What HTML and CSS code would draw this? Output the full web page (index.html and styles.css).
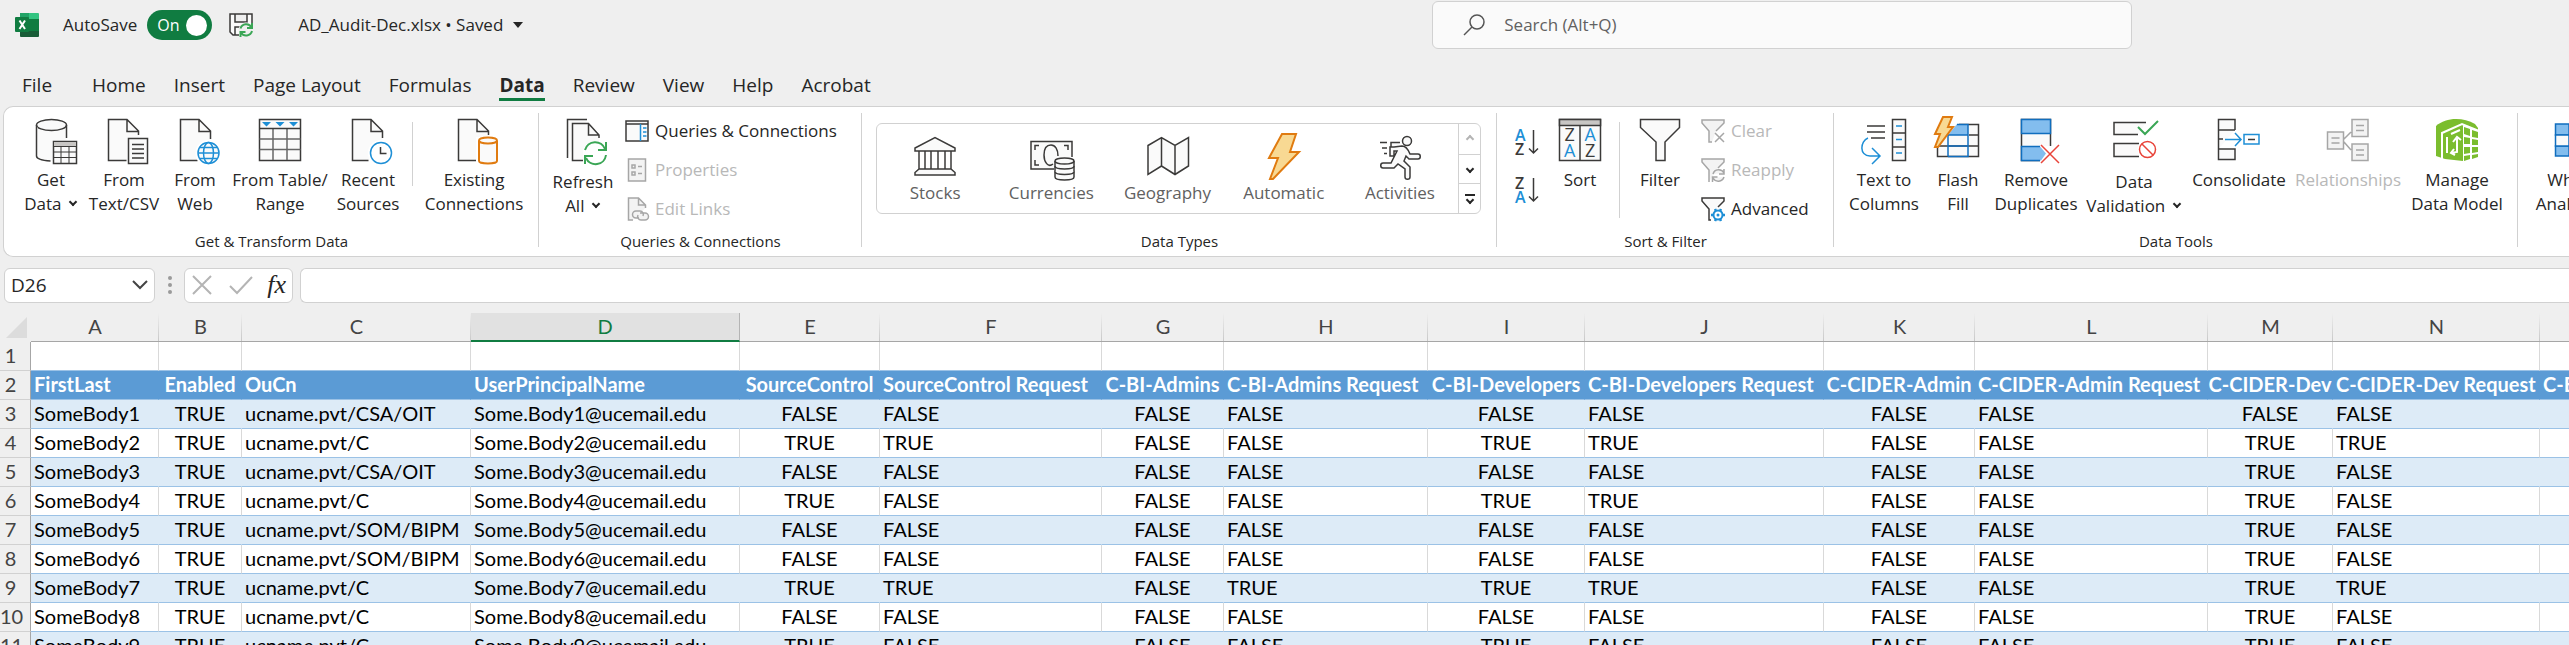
FILE: index.html
```
<!DOCTYPE html>
<html lang="en">
<head>
<meta charset="utf-8">
<title>AD_Audit-Dec.xlsx</title>
<link rel="stylesheet" href="styles.css">
</head>
<body>
<div class="app">
<header class="titlebar">
  <svg class="i24" viewBox="0 0 24 24" aria-hidden="true"><path fill="#21a366" d="M5 0h10v6H5z"/><path fill="#33c481" d="M14 0h9a1 1 0 0 1 1 1v5H14z"/><path fill="#107c41" d="M5 6h19v6H5z"/><path fill="#185c37" d="M5 12h19v11a1 1 0 0 1-1 1H6a1 1 0 0 1-1-1z"/><path fill="#107c41" d="M14 12h10v6H14zM1 4h12a1 1 0 0 1 1 1v13a1 1 0 0 1-1 1H1a1 1 0 0 1-1-1V5a1 1 0 0 1 1-1z"/><path stroke="#fff" stroke-width="2" d="M4.500 7.500l5.500 8.500M10 7.500L4.500 16"/></svg>
  <label class="autosave"><span>AutoSave</span><span class="toggle">On<input type="checkbox" checked></span></label>
  <button class="plain" aria-label="Save"><svg class="i24" viewBox="0 0 24 24"><path class="s" d="M10 22H4l-3-3V1h22v9M6 1v8h12V1M6 22v-8h5"/><circle cx="17" cy="17" r="7.500" fill="#efefef"/><path class="g" d="M11.500 15.500a6 6 0 0 1 11-1M23 10v5h-5M23 18a6 6 0 0 1-11 1.500M11.500 24v-5h5"/></svg></button>
  <button class="plain doc-name">AD_Audit-Dec.xlsx • Saved <svg width="10" height="6" viewBox="0 0 10 6"><path fill="#262626" d="M0 0h10L5 6z"/></svg></button>
  <label class="search"><svg class="i24" viewBox="0 0 24 24"><circle cx="15" cy="9" r="7" fill="none" stroke="#555" stroke-width="1.500"/><path stroke="#555" stroke-width="1.500" d="M10 14L2 22"/></svg><input type="text" placeholder="Search (Alt+Q)" aria-label="Search"></label>
</header>
<nav class="tabs">
  <button class="tab file">File</button><button class="tab">Home</button><button class="tab">Insert</button><button class="tab">Page Layout</button><button class="tab">Formulas</button><button class="tab active">Data</button><button class="tab">Review</button><button class="tab">View</button><button class="tab">Help</button><button class="tab">Acrobat</button>
</nav>
<main class="ribbon">
  <section class="group g-get">
    <div class="body">
      <button class="big"><svg class="i48" viewBox="0 0 48 48"><path class="fill" d="M9.500 7v31c0 3 7 5 15 5h15V7z"/><ellipse class="s" cx="24.500" cy="7" rx="15" ry="5.500"/><path class="s" d="M9.500 7v31c0 3 6 4.500 14 5M39.500 7v13"/><path class="s" d="M26.500 23.500h23v22h-23z"/><path fill="#c8c6c4" d="M27 24h22v4H27z"/><path class="s thin" d="M26.500 28.500h23M26.500 34h23M26.500 39.500h23M34 28.500v17M42 28.500v17"/></svg><span>Get<br>Data <i class="chev"></i></span></button>
      <button class="big"><svg class="i48" viewBox="0 0 48 48"><path class="fill" d="M8.500 1.500H27L38.500 13v29h-30z"/><path class="s" d="M38.500 17v-4L27 1.500H8.500v41h18M27 1.500v12h11.500"/><path class="s" d="M28.500 20.500h19v25h-19z"/><path class="s" stroke="#777" d="M32 26.500h12M32 31h12M32 35.500h12M32 40h12"/></svg><span>From<br>Text/CSV</span></button>
      <button class="big"><svg class="i48" viewBox="0 0 48 48"><path class="fill" d="M9.500 1.500H28L39.500 13v29h-30z"/><path class="s" d="M39.500 21v-8L28 1.500H9.500v41h17M28 1.500v12h11.500"/><circle cx="37.500" cy="35" r="13" fill="#fff"/><g class="b"><circle cx="37.500" cy="35" r="10.500" fill="#fafafa"/><ellipse cx="37.500" cy="35" rx="5" ry="10.500"/><path d="M27 35h21M29 29.500h17M29 40.500h17"/></g></svg><span>From<br>Web</span></button>
      <button class="big"><svg class="i48" viewBox="0 0 48 48"><path class="s" d="M3.500 1.500h41v41h-41z"/><path stroke="#666" fill="none" stroke-width="1.500" d="M3.500 21h41M3.500 31.500h41M17 10v32M31 10v32"/><path class="s" d="M3.500 10.500h41"/><path fill="#1e8fd6" d="M6 4h9l-4.500 4.500zM19.500 4h9L24 8.500zM33 4h9l-4.500 4.500z"/></svg><span>From Table/<br>Range</span></button>
      <button class="big"><svg class="i48" viewBox="0 0 48 48"><path class="fill" d="M8.500 1.500H27L38.500 13v29h-30z"/><path class="s" d="M38.500 20v-7L27 1.500H8.500v41h16M27 1.500v12h11.500"/><circle cx="37" cy="35" r="13" fill="#fff"/><circle class="b" cx="37" cy="35" r="10.500"/><path class="s" d="M36.500 29v6.500h6"/></svg><span>Recent<br>Sources</span></button>
      <div class="split"></div>
      <button class="big"><svg class="i48" viewBox="0 0 48 48"><path class="fill" d="M8.500 1.500H27L38.500 13v29h-30z"/><path class="s" d="M38.500 17v-4L27 1.500H8.500v41h18M27 1.500v12h11.500"/><path fill="#fff" d="M26 19h24v28H26z"/><g class="o"><path d="M29 23v20c0 1.500 4 2.500 9 2.500s9-1 9-2.500V23"/><ellipse cx="38" cy="22.500" rx="9" ry="3"/></g></svg><span>Existing<br>Connections</span></button>
    </div>
    <div class="caption">Get &amp; Transform Data</div>
  </section>
  <section class="group g-query">
    <div class="body">
      <button class="big low"><svg class="i48" viewBox="0 0 48 48"><path class="s" d="M8.500 40V1.500H28"/><path class="fill" d="M13.500 6.500H29L40 17v25H13.500z"/><path class="s" d="M40 20v-3L29.500 5.500h-16v37H24M29.500 5.500V17H40"/><circle cx="36" cy="35" r="12" fill="#fff"/><path class="g" d="M26 32a10.500 10.500 0 0 1 20-1M47 24v8h-8M47 37a10.500 10.500 0 0 1-20 3M26 46v-8h8"/></svg><span>Refresh<br>All <i class="chev"></i></span></button>
      <div class="stack">
        <button class="row"><svg class="i24" viewBox="0 0 24 24"><path class="s" d="M1 2h22v20H1zM1 5h22"/><path class="b" d="M15.500 5v17M18 9h3.500M18 13h3.500M18 17h3.500"/></svg>Queries &amp; Connections</button>
        <button class="row" disabled><svg class="i24" viewBox="0 0 24 24"><path class="d" d="M3.500 1h17v22h-17zM7 7h3v3H7zM7 14h3v3H7zM13 8.500h4M13 15.500h4"/></svg>Properties</button>
        <button class="row" disabled><svg class="i24" viewBox="0 0 24 24"><path class="d" d="M20.500 11V8l-7-7h-10v22H8M13.500 1v7h7"/><path class="d" d="M14 21h-3a3.500 3.500 0 0 1 0-7h4a3.500 3.500 0 0 1 3 5M15 16h5a3.500 3.500 0 0 1 0 7h-4a3.500 3.500 0 0 1-3-5"/></svg>Edit Links</button>
      </div>
    </div>
    <div class="caption">Queries &amp; Connections</div>
  </section>
  <section class="group g-types">
    <div class="gallery">
      <button class="type"><svg class="i48" viewBox="0 0 48 48"><path class="s" d="M4 18v-3L24 4.500 44 15v3zM8 18v18M14 18v18M20 18v18M27 18v18M34 18v18M40 18v18M8 36h32l4 3.500V42H4v-2.500z"/></svg><span>Stocks</span></button>
      <button class="type"><svg class="i48" viewBox="0 0 48 48"><path class="s" d="M27 36H4V8.500h41V24M12 12.500H8V17M8 27v5h4M37 12.500h4V17"/><path class="s" d="M26 31c-5 4-9-2-9-9s3-10 7-10 7 4 7 11"/><g class="s"><path d="M28 28v16c0 4 19 4 19 0V28"/><ellipse cx="37.500" cy="28" rx="9.500" ry="3"/><path d="M28 33c0 4 19 4 19 0M28 38.500c0 4 19 4 19 0"/></g></svg><span>Currencies</span></button>
      <button class="type"><svg class="i48" viewBox="0 0 48 48"><path class="s" d="M4 12.500L17.500 4.500 31 12.500 44.500 4.500V33L31 41.500 17.500 33 4 41.500zM17.500 4.500V33M31 12.500v29"/></svg><span>Geography</span></button>
      <button class="type"><svg class="i48" viewBox="0 0 48 48"><path fill="#f8d993" stroke="#e07b10" stroke-width="2" d="M22 1h14l-6 18h9L13 46h-3l8-21H9z"/></svg><span>Automatic</span></button>
      <button class="type"><svg class="i48" viewBox="0 0 48 48"><circle class="s" cx="31" cy="8" r="4.500"/><path class="s" d="M15 23V9.500h9M4 9.500h7M6 15h5M8 20.500h3"/><path class="s" d="M18 14l8-1c4 0 6 3 8 8h8c3 0 3 5 0 5H33l-3-3-2 5 6 6v10c0 3-5 3-5 0V36l-7-5-4 4H7c-3 0-3-5 0-5h8l6-12h-3v5h-4V14z"/></svg><span>Activities</span></button>
      <div class="spin"><button aria-label="Up" disabled><i class="chev up"></i></button><button aria-label="Down"><i class="chev"></i></button><button class="more" aria-label="More"><i class="chev"></i></button></div>
    </div>
    <div class="caption">Data Types</div>
  </section>
  <section class="group g-sort">
    <div class="body">
      <div class="az">
        <button class="plain" aria-label="Sort A to Z"><svg class="i24" viewBox="0 0 24 24"><text x="0" y="11" class="t tb">A</text><text x="0" y="25" class="t">Z</text><path class="s" d="M18.500 0v23M14 18.500l4.500 4.500 4.500-4.500"/></svg></button>
        <button class="plain" aria-label="Sort Z to A"><svg class="i24" viewBox="0 0 24 24"><text x="0" y="11" class="t">Z</text><text x="0" y="25" class="t tb">A</text><path class="s" d="M18.500 0v23M14 18.500l4.500 4.500 4.500-4.500"/></svg></button>
      </div>
      <button class="big"><svg class="i48" viewBox="0 0 48 48"><path class="s" d="M3.500 1.500h41v41h-41z"/><path fill="#c8c6c4" stroke="#3b3a39" stroke-width="1.500" d="M3.500 1.500h41v6h-41z"/><path class="s" d="M24 7.500v35"/><text x="8.500" y="23" class="u">Z</text><text x="8" y="39" class="u tb">A</text><text x="28.500" y="23" class="u tb">A</text><text x="29" y="39" class="u">Z</text></svg><span>Sort</span></button>
      <div class="split tall"></div>
      <button class="big"><svg class="i48" viewBox="0 0 48 48"><path class="s" d="M4.500 1.500h39v8L29 24v18.500h-9V24L4.500 9.500z"/></svg><span>Filter</span></button>
      <div class="stack">
        <button class="row" disabled><svg class="i24" viewBox="0 0 24 24"><path class="d" d="M11 23h-3V12L1 4V1h22v3l-8 8M14 14l9 9M23 14l-9 9"/></svg>Clear</button>
        <button class="row" disabled><svg class="i24" viewBox="0 0 24 24"><path class="d" d="M8 24V12L1 4V1h22v3l-6 6M12 16a6 6 0 0 1 11-1M23 11v5h-5M23 19a6 6 0 0 1-11 1M11.500 24v-5h5"/></svg>Reapply</button>
        <button class="row"><svg class="i24" viewBox="0 0 24 24"><path class="s" d="M10 23H8V12L1 4V1h22v3l-6 6"/><circle cx="17" cy="18" r="4.500" fill="none" stroke="#1e8fd6" stroke-width="2"/><circle cx="17" cy="18" r="1.500" fill="#1e8fd6"/><path stroke="#1e8fd6" stroke-width="2.500" d="M14 12l1 2M20 12l-1 2M14 24l1-2M20 24l-1-2M10 18h3M21 18h3"/></svg>Advanced</button>
      </div>
    </div>
    <div class="caption">Sort &amp; Filter</div>
  </section>
  <section class="group g-tools">
    <div class="body">
      <button class="big"><svg class="i48" viewBox="0 0 48 48"><path class="s" d="M7 8h18M7 14h18M11 20h14M32.500 1.500h13v41h-13zM32.500 15h13M32.500 29h13"/><path class="b" d="M8 20c-8 3-9 18 2 18h10M12 30l8 8-8 8M36 8h6M36 21.500h6M36 35h6"/></svg><span>Text to<br>Columns</span></button>
      <button class="big"><svg class="i48" viewBox="0 0 48 48"><path class="s" d="M3.500 28v10.500h41v-32H25M35 17h9.500M3.500 28h41"/><path fill="#83bdee" d="M14 17L23 6h11v11z"/><path fill="none" stroke="#106ebe" stroke-width="1.500" d="M14 38.500V17h20M14 28h20M23 6.500h11v32H14"/><path fill="#f8d993" stroke="#e07b10" stroke-width="2" d="M9-1h9l-4 10h5L4 29H1l5-13H1z"/></svg><span>Flash<br>Fill</span></button>
      <button class="big"><svg class="i48" viewBox="0 0 48 48"><path class="s" d="M9.500 1.500h29v41h-29z"/><path fill="#83bdee" stroke="#106ebe" stroke-width="1.500" d="M9.500 1.500h29v14h-29z"/><path fill="#fff" d="M28 28h20v19H28z"/><path fill="#83bdee" d="M9.500 28.500H28l6 7-5 7H9.500z"/><path fill="none" stroke="#106ebe" stroke-width="1.500" d="M28 28.500H9.500v14H28"/><path stroke="#e8443a" stroke-width="1.500" d="M29 27l18 18M47 27L29 45"/></svg><span>Remove<br>Duplicates</span></button>
      <button class="big low"><svg class="i48" viewBox="0 0 48 48"><path class="s" d="M36 4.500H4v12h24M29 25.500H4v13h25"/><path class="g" d="M28 9l7 7L48 3"/><circle cx="37.500" cy="31.500" r="10" fill="#fff"/><g fill="none" stroke="#e8443a" stroke-width="1.500"><circle cx="37.500" cy="31.500" r="8"/><path d="M32 26l11 11"/></g></svg><span>Data<br>Validation <i class="chev"></i></span></button>
      <button class="big"><svg class="i48" viewBox="0 0 48 48"><path class="s" d="M20 12V1.500H3.500v40H20V31H3.500M3.500 12H20M3.500 21H8"/><path class="b" d="M10 21.500h16M20 15l6 6.500-6 6.500M29 16.500h15v9.500H29z"/><path class="s" d="M33 21.500h7"/></svg><span>Consolidate</span></button>
      <button class="big" disabled><svg class="i48" viewBox="0 0 48 48"><path class="d" d="M3.500 14h16v17h-16zM28 1.500h16v17H28zM28 26h16v16.500H28zM7.500 20h8M7.500 25h8M32 7.500h8M32 12.500h8M32 32h8M32 37h8M20 21l7-7M20 24l7 8"/></svg><span>Relationships</span></button>
      <button class="big"><svg class="i48" viewBox="0 0 48 48"><path fill="#7bbd2e" d="M3 8C13-1 30-1 42 6l3 4v28L30 43 12 41 3 38z"/><path fill="none" stroke="#fff" stroke-width="2" d="M9 42V15L29 6l17 7M14 19v16M18 16l9-4"/><path fill="#fff" d="M30 7l16 6v26l-16 5z"/><path fill="#7bbd2e" d="M31 9l6 2v7l-6-2zM39 12l6 2v6l-6-1zM31 19l6 1v6h-6zM39 21l6 1v5h-6zM31 29h6v6l-6 1zM39 29h6v5l-6 1zM31 38l6-1v4l-6 2zM39 37l6-1v3l-6 2z"/><path fill="none" stroke="#fff" stroke-width="2" d="M20 24l4-5 4 3M24 20v14l-6 1M21 31l-3 4 4 2"/></svg><span>Manage<br>Data Model</span></button>
    </div>
    <div class="caption">Data Tools</div>
  </section>
  <section class="group g-forecast">
    <div class="body">
      <button class="big"><svg class="i48" viewBox="0 0 48 48"><path fill="#83bdee" stroke="#106ebe" stroke-width="1.500" d="M3.500 6h30v11h-30zM3.500 28h30v10h-30z"/><path fill="#fafafa" stroke="#106ebe" stroke-width="1.500" d="M3.500 17h30v11h-30zM17 6v32"/></svg><span>What-If<br>Analysis <i class="chev"></i></span></button>
    </div>
  </section>
</main>
<div class="formula">
  <div class="box name"><input type="text" value="D26" aria-label="Name box"><svg width="16" height="10" viewBox="0 0 16 10"><path class="n" d="M1 1l7 7 7-7"/></svg></div>
  <div class="dots"><i></i><i></i><i></i></div>
  <div class="box fx"><button class="plain" aria-label="Cancel" disabled><svg class="i24" viewBox="0 0 24 24"><path class="x" d="M3 3l18 18M21 3L3 21"/></svg></button><button class="plain" aria-label="Enter" disabled><svg class="i24" viewBox="0 0 24 24"><path class="x" d="M1 13l7 7L23 4"/></svg></button><button class="plain fxb" aria-label="Insert function">fx</button></div>
  <input class="box field" type="text" aria-label="Formula bar">
</div>
<div class="sheet">
<table>
<colgroup><col class="w-n"><col class="w-a"><col class="w-b"><col class="w-c"><col class="w-d"><col class="w-e"><col class="w-f"><col class="w-g"><col class="w-h"><col class="w-i"><col class="w-j"><col class="w-k"><col class="w-l"><col class="w-m"><col class="w-o"><col class="w-p"></colgroup>
<thead><tr><th class="corner"><svg width="21" height="21" viewBox="0 0 21 21"><path fill="#dcdcdc" d="M21 0v21H0z"/></svg></th><th>A</th><th>B</th><th>C</th><th class="sel">D</th><th>E</th><th>F</th><th>G</th><th>H</th><th>I</th><th>J</th><th>K</th><th>L</th><th>M</th><th>N</th><th>O</th></tr></thead>
<tbody>
<tr class="first"><th>1</th><td></td><td></td><td></td><td></td><td></td><td></td><td></td><td></td><td></td><td></td><td></td><td></td><td></td><td></td><td></td></tr>
<tr class="head"><th>2</th><td>FirstLast</td><td>Enabled</td><td>OuCn</td><td>UserPrincipalName</td><td>SourceControl</td><td>SourceControl Request</td><td>C-BI-Admins</td><td>C-BI-Admins Request</td><td>C-BI-Developers</td><td>C-BI-Developers Request</td><td>C-CIDER-Admin</td><td>C-CIDER-Admin Request</td><td>C-CIDER-Dev</td><td>C-CIDER-Dev Request</td><td>C-ED</td></tr>
<tr><th>3</th><td>SomeBody1</td><td>TRUE</td><td>ucname.pvt/CSA/OIT</td><td>Some.Body1@ucemail.edu</td><td>FALSE</td><td>FALSE</td><td>FALSE</td><td>FALSE</td><td>FALSE</td><td>FALSE</td><td>FALSE</td><td>FALSE</td><td>FALSE</td><td>FALSE</td><td></td></tr>
<tr><th>4</th><td>SomeBody2</td><td>TRUE</td><td>ucname.pvt/C</td><td>Some.Body2@ucemail.edu</td><td>TRUE</td><td>TRUE</td><td>FALSE</td><td>FALSE</td><td>TRUE</td><td>TRUE</td><td>FALSE</td><td>FALSE</td><td>TRUE</td><td>TRUE</td><td></td></tr>
<tr><th>5</th><td>SomeBody3</td><td>TRUE</td><td>ucname.pvt/CSA/OIT</td><td>Some.Body3@ucemail.edu</td><td>FALSE</td><td>FALSE</td><td>FALSE</td><td>FALSE</td><td>FALSE</td><td>FALSE</td><td>FALSE</td><td>FALSE</td><td>TRUE</td><td>FALSE</td><td></td></tr>
<tr><th>6</th><td>SomeBody4</td><td>TRUE</td><td>ucname.pvt/C</td><td>Some.Body4@ucemail.edu</td><td>TRUE</td><td>FALSE</td><td>FALSE</td><td>FALSE</td><td>TRUE</td><td>TRUE</td><td>FALSE</td><td>FALSE</td><td>TRUE</td><td>FALSE</td><td></td></tr>
<tr><th>7</th><td>SomeBody5</td><td>TRUE</td><td>ucname.pvt/SOM/BIPM</td><td>Some.Body5@ucemail.edu</td><td>FALSE</td><td>FALSE</td><td>FALSE</td><td>FALSE</td><td>FALSE</td><td>FALSE</td><td>FALSE</td><td>FALSE</td><td>TRUE</td><td>FALSE</td><td></td></tr>
<tr><th>8</th><td>SomeBody6</td><td>TRUE</td><td>ucname.pvt/SOM/BIPM</td><td>Some.Body6@ucemail.edu</td><td>FALSE</td><td>FALSE</td><td>FALSE</td><td>FALSE</td><td>FALSE</td><td>FALSE</td><td>FALSE</td><td>FALSE</td><td>TRUE</td><td>FALSE</td><td></td></tr>
<tr><th>9</th><td>SomeBody7</td><td>TRUE</td><td>ucname.pvt/C</td><td>Some.Body7@ucemail.edu</td><td>TRUE</td><td>TRUE</td><td>FALSE</td><td>TRUE</td><td>TRUE</td><td>TRUE</td><td>FALSE</td><td>FALSE</td><td>TRUE</td><td>TRUE</td><td></td></tr>
<tr><th>10</th><td>SomeBody8</td><td>TRUE</td><td>ucname.pvt/C</td><td>Some.Body8@ucemail.edu</td><td>FALSE</td><td>FALSE</td><td>FALSE</td><td>FALSE</td><td>FALSE</td><td>FALSE</td><td>FALSE</td><td>FALSE</td><td>TRUE</td><td>FALSE</td><td></td></tr>
<tr><th>11</th><td>SomeBody9</td><td>TRUE</td><td>ucname.pvt/C</td><td>Some.Body9@ucemail.edu</td><td>TRUE</td><td>FALSE</td><td>FALSE</td><td>FALSE</td><td>TRUE</td><td>FALSE</td><td>FALSE</td><td>FALSE</td><td>TRUE</td><td>FALSE</td><td></td></tr>
</tbody>
</table>
</div>
</div>
</body>
</html>
```
FILE: styles.css
```
* { box-sizing: border-box; }
body { margin: 0; background: #efefef; color: #262626; font: 17px/24px "Open Sans", "Noto Sans", sans-serif; }
button, input { font: inherit; color: inherit; margin: 0; }
button { background: none; border: 0; padding: 0; white-space: nowrap; }
svg { flex: none; overflow: visible; }
.app { height: 100vh; overflow: hidden; display: flex; flex-direction: column; }
.i24 { width: 24px; height: 24px; }
.i48 { width: 48px; height: 48px; }
.s { fill: #fafafa; stroke: #3b3a39; stroke-width: 1.5; }
.az .s { fill: none; }
.thin { fill: none; stroke-width: 1; }
.fill { fill: #fafafa; }
.g { fill: none; stroke: #3aa655; stroke-width: 2; }
.b { fill: none; stroke: #1e8fd6; stroke-width: 1.5; }
.o { fill: #fafafa; stroke: #e07b10; stroke-width: 2; }
.d { fill: #f3f3f3; stroke: #a6a6a6; stroke-width: 1.5; }
.n { fill: none; stroke: #444; stroke-width: 2; }
.x { fill: none; stroke: #b4b4b4; stroke-width: 2; }
.t { font-size: 16px; font-weight: 600; fill: #3b3a39; }
.u { font-size: 18px; fill: #3b3a39; }
.t.tb, .u.tb { fill: #1e8fd6; }
.plain { display: flex; align-items: center; }

.titlebar { display: flex; align-items: center; height: 50px; flex: none; padding: 0 17vw 0 15px; }
.autosave { display: flex; align-items: center; gap: 10px; margin: 0 17px 0 24px; }
.toggle { display: flex; align-items: center; justify-content: space-between; width: 65px; height: 30px; padding: 0 5px 0 10px; border-radius: 15px; background: #107c41; color: #fff; font-size: 16px; }
.toggle input { appearance: none; width: 21px; height: 21px; border-radius: 50%; background: #fff; }
.doc-name { gap: 10px; margin-left: 45px; }
.search { display: flex; align-items: center; gap: 18px; width: 700px; height: 48px; margin-left: auto; padding-left: 29px; border: 1px solid #d1d1d1; border-radius: 6px; background: #fafafa; }
.search input { flex: 1; border: 0; background: none; padding: 0; outline: 0; }
.search input::placeholder { color: #616161; }

.tabs { display: flex; align-items: flex-end; gap: 28px; height: 56px; flex: none; padding: 0 0 5px 22px; font-size: 19px; }
.tab { padding-bottom: 1px; border-bottom: 3px solid transparent; }
.tab.file { margin-right: 12px; }
.tab.active { font-weight: 700; border-bottom-color: #107c41; }

.ribbon { display: flex; flex: none; height: 151px; margin-left: 3px; overflow: hidden; background: #fff; border: 1px solid #d1d1d1; border-right: 0; border-radius: 10px 0 0 10px; }
.group { display: flex; flex-direction: column; flex: none; padding-bottom: 5px; background: linear-gradient(#d1d1d1, #d1d1d1) right 6px / 1px 134px no-repeat; }
.body { display: flex; flex: 1; align-items: flex-start; }
.caption { text-align: center; font-size: 15px; line-height: 20px; }
.big { display: flex; flex-direction: column; align-items: center; gap: 2px; flex: none; padding-top: 11px; }
.big.low span { margin-top: 2px; }
.split { width: 1px; height: 64px; margin: 15px 11px 0 12px; background: #d1d1d1; }
.split.tall { height: 96px; margin: 15px 11px 0 10px; }
.chev { display: inline-block; vertical-align: 5px; width: 6px; height: 6px; margin: 0 2px 0 4px; border: solid #262626; border-width: 0 2px 2px 0; rotate: 45deg; }
.stack { display: flex; flex-direction: column; padding-top: 4px; }
.row { display: flex; align-items: center; gap: 6px; height: 39px; }
.row:disabled, .big:disabled { color: #b8b8b8; }

.g-get { width: 535px; }
.g-get .body { padding-left: 16px; }
.g-get .big:nth-child(1) { width: 62px; }
.g-get .big:nth-child(2) { width: 84px; }
.g-get .big:nth-child(3) { width: 58px; }
.g-get .big:nth-child(4) { width: 112px; }
.g-get .big:nth-child(5) { width: 64px; }
.g-get .big:nth-child(7) { width: 100px; }
.g-query { width: 323px; }
.g-query .big { width: 64px; margin: 0 10px 0 12px; }
.g-types { width: 635px; }
.g-types .caption { margin-top: auto; }
.gallery { display: flex; height: 91px; margin: 16px 16px 0 14px; border: 1px solid #d1d1d1; border-radius: 6px; }
.type { display: flex; flex-direction: column; align-items: center; flex: 1; padding-top: 9px; color: #616161; }
.spin { display: grid; grid-template-rows: 1fr 1fr 1fr; width: 22px; border-left: 1px solid #d1d1d1; }
.spin button { display: grid; place-items: center; }
.spin button + button { border-top: 1px solid #d1d1d1; }
.spin .chev { margin: 0; }
.spin .up { rotate: 225deg; border-color: #b4b4b4; }
.spin .more { align-content: center; gap: 1px; }
.spin .more::before { content: ""; width: 10px; height: 2px; background: #262626; }
.g-sort { width: 337px; }
.az { display: flex; flex-direction: column; gap: 24px; padding: 23px 12px 0 18px; }
.g-sort .big { width: 58px; }
.g-sort .stack { margin-left: 12px; }
.g-tools { width: 684px; }
.g-tools .body { padding-left: 8px; }
.g-tools .big:nth-child(1) { width: 84px; }
.g-tools .big:nth-child(2) { width: 64px; }
.g-tools .big:nth-child(3) { width: 92px; }
.g-tools .big:nth-child(4) { width: 104px; }
.g-tools .big:nth-child(5) { width: 106px; }
.g-tools .big:nth-child(6) { width: 112px; }
.g-tools .big:nth-child(7) { width: 106px; }
.g-forecast { background: none; width: 120px; }
.g-forecast .big { width: 88px; margin-left: 14px; }

.formula { display: flex; flex: none; align-items: center; height: 56px; padding-left: 4px; }
.box { display: flex; align-items: center; height: 35px; background: #fff; border: 1px solid #d1d1d1; border-radius: 6px; }
.name { width: 151px; padding: 0 6px; }
.name input { flex: 1; min-width: 0; border: 0; padding: 0; outline: 0; font-size: 19px; }
.dots { display: grid; gap: 3px; margin: 0 12px 0 13px; }
.dots i { width: 4px; height: 4px; border-radius: 50%; background: #9a9a9a; }
.fx { width: 109px; justify-content: space-between; padding: 0 6px 0 5px; }
.fxb { font: italic 26px/28px "Liberation Serif", serif; }
.field { flex: 1; margin-left: 7px; border-right: 0; border-radius: 6px 0 0 6px; outline: 0; }

.sheet { flex: 1; min-height: 0; overflow: hidden; font: 20px/27px Lato, "Open Sans", sans-serif; color: #000; }
table { table-layout: fixed; width: 2700px; border-collapse: separate; border-spacing: 0; }
th, td { height: 29px; padding: 0 0 1px; overflow: hidden; white-space: nowrap; }
thead th { border-bottom: 1px solid #a6a6a6; color: #444; font-weight: 400; background: linear-gradient(#efefef, #c8c8c8) right / 1px 100% no-repeat; }
thead .sel { background: #e1e1e1; border-bottom: 2px solid #107c41; border-right: 1px solid #b4b4b4; padding-bottom: 0; color: #107c41; }
thead .corner { background: none; border: 0; text-align: right; padding-right: 4px; line-height: 0; }
tbody th { font-weight: 400; color: #444; background: #efefef; border-right: 1px solid #a6a6a6; border-bottom: 1px solid #d1d1d1; padding-right: 9px; }
td { background: #fff; border-bottom: 1px solid #9bc2e6; border-right: 1px solid #d9d9d9; padding: 0 3px 1px; }
tbody tr:nth-child(odd):not(.first) td { background: #ddebf7; border-right-color: #ddebf7; }
tbody .head td { background: #5b9bd5; border-right-color: #5b9bd5; color: #fff; font-weight: 700; }
td:nth-child(3), td:nth-child(6), td:nth-child(8), td:nth-child(10), td:nth-child(12), td:nth-child(14) { text-align: center; }
tbody .head td:nth-child(12), tbody .head td:nth-child(14) { padding-left: 0; padding-right: 0; }
.w-n { width: 31px; } .w-a { width: 128px; } .w-b { width: 83px; } .w-c { width: 229px; } .w-d { width: 269px; } .w-e { width: 140px; } .w-f { width: 222px; } .w-g { width: 122px; } .w-h { width: 204px; } .w-i { width: 157px; } .w-j { width: 239px; } .w-k { width: 151px; } .w-l { width: 233px; } .w-m { width: 125px; } .w-o { width: 207px; } .w-p { width: 160px; }
```
